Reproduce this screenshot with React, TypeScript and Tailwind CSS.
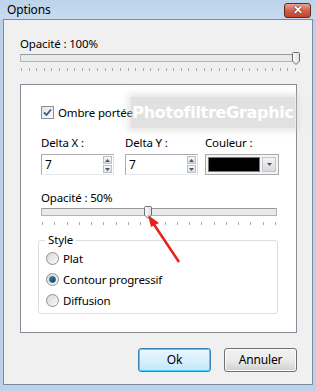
import React from "react";

const font = { fontFamily: '"Noto Sans", "Open Sans", sans-serif', letterSpacing: "-0.15px" };

function Ticks({ count }: { count: number }) {
  return (
    <div className="flex justify-between h-[3px]">
      {Array.from({ length: count }, (_, i) => (
        <div key={i} className="w-px h-[3px] bg-[#a9a9a9]" />
      ))}
    </div>
  );
}

function Thumb() {
  return (
    <svg width="8" height="13" viewBox="0 0 8 13">
      <defs>
        <linearGradient id="thumbg" x1="0" y1="0" x2="1" y2="0">
          <stop offset="0" stopColor="#ffffff" />
          <stop offset="1" stopColor="#dcdcdc" />
        </linearGradient>
      </defs>
      <path d="M0.5 1.5 Q0.5 0.5 1.5 0.5 L6.5 0.5 Q7.5 0.5 7.5 1.5 L7.5 9 L4 12.5 L0.5 9 Z" fill="url(#thumbg)" stroke="#6f6f6f" />
    </svg>
  );
}

function Slider({ thumbLeft, ticks }: { thumbLeft: number; ticks: number }) {
  return (
    <div>
      <div className="relative h-[12px] pt-[2px]">
        <div className="h-[8px] border border-[#b3b3b3] border-t-[#9a9a9a] bg-[#e7eaea] rounded-[1px]" />
        <div className="absolute top-0" style={{ left: thumbLeft }}>
          <Thumb />
        </div>
      </div>
      <div className="mt-[4px] px-px">
        <Ticks count={ticks} />
      </div>
    </div>
  );
}

function Spin() {
  return (
    <div className="flex flex-col gap-px">
      <div className="w-[9px] h-[8px] border border-[#b9bfc6] bg-gradient-to-b from-[#f7f7f7] to-[#dcdfe3] flex items-center justify-center">
        <svg width="5" height="3" viewBox="0 0 5 3"><path d="M0 3 L2.5 0 L5 3 Z" fill="#4d5560" /></svg>
      </div>
      <div className="w-[9px] h-[8px] border border-[#b9bfc6] bg-gradient-to-b from-[#f7f7f7] to-[#dcdfe3] flex items-center justify-center">
        <svg width="5" height="3" viewBox="0 0 5 3"><path d="M0 0 L2.5 3 L5 0 Z" fill="#4d5560" /></svg>
      </div>
    </div>
  );
}

function NumberField({ value }: { value: string }) {
  return (
    <div className="w-[73px] h-[21px] border border-[#abadb3] border-b-[#e3e9ef] border-r-[#dbdfe6] bg-white flex items-center justify-between pl-[3px] pr-[1px]">
      <span className="text-[12px] text-black">{value}</span>
      <Spin />
    </div>
  );
}

function Radio({ checked, label }: { checked?: boolean; label: string }) {
  return (
    <div className="flex items-center gap-[4px] h-[21px]">
      <div className="w-[13px] h-[13px] rounded-full border border-[#8e8f8f] bg-gradient-to-br from-[#d8d8d8] to-[#f9f9f9] flex items-center justify-center">
        {checked && <div className="w-[7px] h-[7px] rounded-full bg-gradient-to-br from-[#2b8fbf] to-[#0d3b58] border border-[#1c5a7c]" />}
      </div>
      <span className="text-[11.5px] text-black">{label}</span>
    </div>
  );
}

export default function App() {
  return (
    <div className="w-[316px] h-[391px] bg-[#bcd2ea] flex flex-col overflow-hidden" style={font}>
      {/* title bar */}
      <div className="h-[19px] flex items-center justify-between pl-[7px] pr-[5px] bg-gradient-to-b from-[#bdd3eb] to-[#c8dbef]">
        <span className="text-[12px] text-black leading-none">Options</span>
        <div className="w-[27px] h-[15px] mt-[1px] rounded-[3px] border border-[#5c2a24] bg-gradient-to-b from-[#e8a493] via-[#d0604a] to-[#c2432e] flex items-center justify-center">
          <span className="text-white font-bold text-[12px] leading-none" style={{ textShadow: "0 0 1px #3a1410, 0 0 1px #3a1410" }}>
            ✕
          </span>
        </div>
      </div>

      {/* client area */}
      <div className="flex-1 mx-[3px] mb-[6px] border border-[#7d8a98] bg-[#f0f0f0] relative">
        <div className="pl-[16px] pr-[15px] pt-[16px]">
          <div className="text-[11.5px] leading-[15px] text-black">Opacité : 100%</div>
          <div className="mt-[1px]">
            <Slider thumbLeft={272} ticks={37} />
          </div>

          {/* panel */}
          <div className="mt-[13px] h-[249px] border border-[#898c95] bg-white pl-[20px] pr-[19px] pt-[20px] relative">
            <div className="flex items-center gap-[4px] h-[15px]">
              <div className="w-[13px] h-[13px] border border-[#8e8f8f] bg-gradient-to-br from-[#dfe3ea] to-[#fbfbfb] flex items-center justify-center">
                <svg width="9" height="9" viewBox="0 0 9 9">
                  <path d="M1 4.5 L3.5 7 L8 1.5" fill="none" stroke="#3d5888" strokeWidth="1.8" />
                </svg>
              </div>
              <span className="text-[11.5px] text-black">Ombre portée</span>
            </div>

            <div className="mt-[15px] flex gap-[11px]">
              <div className="flex flex-col gap-[4px]">
                <span className="text-[11.5px] leading-[15px] text-black">Delta X :</span>
                <NumberField value="7" />
              </div>
              <div className="flex flex-col gap-[4px]">
                <span className="text-[11.5px] leading-[15px] text-black">Delta Y :</span>
                <NumberField value="7" />
              </div>
              <div className="flex flex-col gap-[4px] ml-[-4px]">
                <span className="text-[11.5px] leading-[15px] text-black">Couleur :</span>
                <div className="w-[74px] h-[21px] border border-[#a9a9a9] bg-[#f4f4f4] flex items-center p-[2px] gap-[2px]">
                  <div className="flex-1 h-full border border-[#7a7a7a] bg-black" />
                  <div className="w-[14px] h-full border border-[#c3c7cd] bg-gradient-to-b from-[#f3f3f3] to-[#d6d9de] flex items-center justify-center">
                    <svg width="5" height="3" viewBox="0 0 5 3"><path d="M0 0 L2.5 3 L5 0 Z" fill="#4d5560" /></svg>
                  </div>
                </div>
              </div>
            </div>

            <div className="mt-[15px] text-[11.5px] leading-[15px] text-black">Opacité : 50%</div>
            <div className="mt-[1px]">
              <Slider thumbLeft={103} ticks={20} />
            </div>

            {/* style group */}
            <div className="mt-[15px] ml-[-3px] mr-[-1px] relative border border-[#d5dfe5] rounded-[3px] pl-[7px] pt-[7px] pb-[2px]">
              <span className="absolute -top-[9px] left-[6px] px-[3px] bg-white text-[11.5px] leading-[15px] text-black">Style</span>
              <Radio label="Plat" />
              <Radio checked label="Contour progressif" />
              <Radio label="Diffusion" />
            </div>

            {/* watermark */}
            <div
              className="absolute top-[12px] left-[110px] w-[164px] h-[31px] bg-[#cdcdcd]/60 flex items-center justify-center"
              style={{ boxShadow: "0 0 6px 3px rgba(205,205,205,0.5)" }}
            >
              <span className="text-white font-bold text-[16px] tracking-[-0.3px]" style={{ fontFamily: '"DejaVu Sans", Verdana, sans-serif' }}>
                PhotofiltreGraphic
              </span>
            </div>
          </div>

          {/* buttons */}
          <div className="mt-[15px] flex justify-end gap-[13px]">
            <div className="w-[73px] h-[24px] rounded-[3px] border border-[#3c7fb1] bg-gradient-to-b from-[#eaf6fd] via-[#d9f0fc] to-[#bee6fd] flex items-center justify-center shadow-[inset_0_0_0_1px_#48d2fb]">
              <span className="text-[12px] text-black">Ok</span>
            </div>
            <div className="w-[73px] h-[24px] rounded-[3px] border border-[#707070] bg-gradient-to-b from-[#f2f2f2] via-[#ebebeb] to-[#cfcfcf] flex items-center justify-center shadow-[inset_0_0_0_1px_#fcfcfc]">
              <span className="text-[12px] text-black">Annuler</span>
            </div>
          </div>
        </div>

        {/* red arrow */}
        <svg className="absolute left-0 top-0 pointer-events-none" width="310" height="366" viewBox="0 0 310 366">
          <line x1="175" y1="242" x2="147" y2="200" stroke="#e8201a" strokeWidth="2.5" />
          <path d="M144 195 L155 203 L147 207 Z" fill="#e8201a" />
        </svg>
      </div>
    </div>
  );
}
